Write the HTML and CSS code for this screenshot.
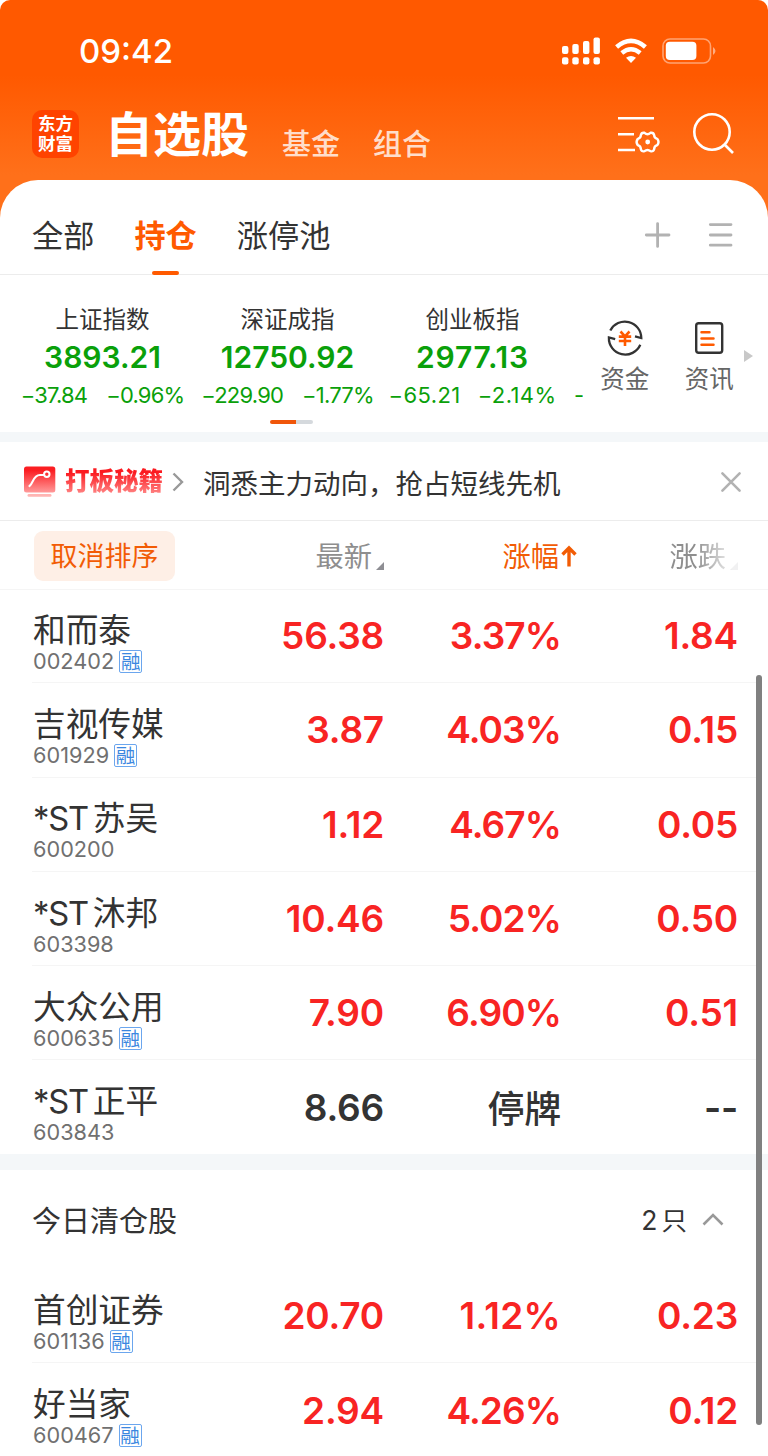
FILE: index.html
```html
<!DOCTYPE html>
<html lang="zh-CN">
<head>
    <meta charset="utf-8"/>
    <title>自选股</title>
    <link rel="stylesheet" href="styles.css">
</head>

<body>
<div id="app">
    <div id="top">
        <div class="status">
            <span class="time">09:42</span>
            <svg class="signal" width="156" height="32" viewBox="560 35 156 32">
                <g fill="#fff">
                    <rect x="562" y="46" width="6.4" height="8" rx="2"/>
                    <rect x="572.3" y="44" width="6.4" height="10" rx="2"/>
                    <rect x="583" y="41" width="6.4" height="13" rx="2"/>
                    <rect x="593.5" y="37.5" width="6.4" height="16.5" rx="2"/>
                    <rect x="562" y="57.3" width="6.4" height="7.2" rx="2"/>
                    <rect x="572.3" y="57.3" width="6.4" height="7.2" rx="2"/>
                    <rect x="583" y="57.3" width="6.4" height="7.2" rx="2"/>
                    <rect x="593.5" y="57.3" width="6.4" height="7.2" rx="2"/>
                    <path d="M631 63 L626 57.8 Q631 54.2 636 57.8 Z"/>
                    <rect x="665.8" y="41.8" width="30.6" height="18.3" rx="4"/>
                </g>
                <path d="M616.6 47 Q631 34.8 645.4 47" fill="none" stroke="#fff" stroke-width="4.6"/>
                <path d="M621.8 53 Q631 45.4 640.2 53" fill="none" stroke="#fff" stroke-width="4.4"/>
                <rect x="663" y="39" width="47.5" height="24" rx="7" fill="none" stroke="#fff" stroke-opacity=".45" stroke-width="1.6"/>
                <path d="M713 47 Q718 51 713 55 Z" fill="#fff" fill-opacity=".5"/>
            </svg>
        </div>
        <div class="nav">
            <div class="logo"><span>东方</span><span>财富</span></div>
            <div class="title">自选股</div>
            <div class="sub">基金</div>
            <div class="sub">组合</div>
            <svg class="nav-icons" width="120" height="46" viewBox="616 111 120 46" fill="none" stroke="#fff" stroke-width="2.6">
                <path d="M618 118.3 H654 M618 134.2 H634 M618 150 H635"/>
                <path d="M644.5 132.8 Q647.5 135.5 650.5 132.8 Q653.5 132.2 654.2 135.2 Q654.2 138 657.2 138.8 Q659.8 142 657.2 145.2 Q654.2 146 654.2 149 Q653.5 152 650.5 151.2 Q647.5 148.6 644.5 151.2 Q641.5 152 640.8 149 Q640.8 146 637.8 145.2 Q635.4 142 637.8 138.8 Q640.8 138 640.8 135.2 Q641.5 132.2 644.5 132.8 Z" stroke-width="2.4" stroke-linejoin="round"/>
                <circle cx="647.7" cy="142" r="2.4" fill="#fff" stroke="none"/>
                <circle cx="712" cy="132" r="17.7"/>
                <path d="M724.5 144.5 L733 153"/>
            </svg>
        </div>
    </div>

    <div id="sheet">
        <div class="tabs">
            <div class="tab">全部</div>
            <div class="tab active">持仓</div>
            <div class="tab">涨停池</div>
            <svg class="tab-icons" width="90" height="28" viewBox="644 221 90 28" fill="none" stroke="#b2b2b2" stroke-width="2.8" stroke-linecap="round">
                <path d="M646.3 235 H669 M657.6 223.6 V246.4"/>
                <path d="M710.3 224.6 H731 M710.3 235 H731 M710.3 245.2 H731"/>
            </svg>
        </div>

        <div class="market">
            <div class="indexes">
                <div class="index">
                    <div class="name">上证指数</div>
                    <div class="point">3893.21</div>
                    <div class="diff"><span>−37.84</span><span>−0.96%</span></div>
                </div>
                <div class="index">
                    <div class="name">深证成指</div>
                    <div class="point">12750.92</div>
                    <div class="diff"><span>−229.90</span><span>−1.77%</span></div>
                </div>
                <div class="index loose">
                    <div class="name">创业板指</div>
                    <div class="point">2977.13</div>
                    <div class="diff"><span>−65.21</span><span>−2.14%</span></div>
                </div>
                <div class="more">-</div>
            </div>
            <div class="entry">
                <svg width="38" height="38" viewBox="606 319 38 38" fill="none" stroke="#333" stroke-width="2.3">
                    <path d="M610.3 330.5 A16.4 16.4 0 0 1 641.3 338 L635 336.3"/>
                    <path d="M640.3 344.8 A16.4 16.4 0 0 1 608.9 337.5 L615.2 339.2"/>
                    <path d="M620.5 331.5 L625 336.3 L629.5 331.5 M618.8 336.6 H631.2 M618.8 341 H631.2 M625 336.3 V346" stroke="#ff5a00" stroke-width="2.6"/>
                </svg>
                <span>资金</span>
            </div>
            <div class="entry">
                <svg width="38" height="38" viewBox="690.5 319 38 38" fill="none">
                    <rect x="696.7" y="323.2" width="26" height="29.6" rx="2.5" stroke="#333" stroke-width="2.4"/>
                    <path d="M702 332.2 H710 M702 338.5 H714 M702 344.7 H714" stroke="#ff5a00" stroke-width="2.5" stroke-linecap="round"/>
                </svg>
                <span>资讯</span>
            </div>
            <div class="next"></div>
            <div class="pager"></div>
        </div>

        <div class="promo">
            <svg width="32" height="32" viewBox="24 466 32 32" fill="none">
                <defs>
                    <linearGradient id="fade" x1="0" y1="0" x2="0" y2="1">
                        <stop offset=".15" stop-color="#fb1e22"/>
                        <stop offset="1" stop-color="#ff9a9a"/>
                    </linearGradient>
                </defs>
                <rect x="24" y="466.5" width="31.3" height="26" rx="2.5" fill="url(#fade)"/>
                <rect x="27.5" y="494" width="24" height="2.8" rx="1.4" fill="#ffb5b3"/>
                <path d="M29.5 486 C33 484 33 475 40 475 H44" stroke="#fff" stroke-width="2.2" stroke-linecap="round"/>
                <circle cx="46.8" cy="474.3" r="2.7" stroke="#fff" stroke-width="2"/>
            </svg>
            <span class="brand">打板秘籍</span>
            <svg width="12" height="20" viewBox="0 0 12 20" fill="none" stroke="#999" stroke-width="2.4">
                <path d="M1.5 1.5 L10 10 L1.5 18.5"/>
            </svg>
            <span class="slogan">洞悉主力动向，抢占短线先机</span>
            <svg class="close" width="22" height="22" viewBox="0 0 22 22" stroke="#b2b2b2" stroke-width="2.6" stroke-linecap="round">
                <path d="M2.4 2.4 L19.6 19.6 M19.6 2.4 L2.4 19.6"/>
            </svg>
        </div>

        <div class="row head">
            <div class="reset">取消排序</div>
            <div class="sort">最新<i></i></div>
            <div class="sort on">涨幅<svg width="16" height="24" viewBox="0 0 16 24" fill="none" stroke="#f25c05" stroke-width="3.4"><path d="M8 22.5 V4 M1.5 10.5 L8 4 L14.5 10.5"/></svg></div>
            <div class="sort faded">涨跌<i></i></div>
        </div>

        <div class="list">
            <div class="row">
                <div class="stock"><b>和而泰</b><span>002402<em>融</em></span></div>
                <div class="num">56.38</div><div class="num rate">3.37%</div><div class="num">1.84</div>
            </div>
            <div class="row">
                <div class="stock"><b>吉视传媒</b><span>601929<em>融</em></span></div>
                <div class="num">3.87</div><div class="num rate">4.03%</div><div class="num">0.15</div>
            </div>
            <div class="row">
                <div class="stock"><b><u>*ST</u>苏吴</b><span>600200</span></div>
                <div class="num">1.12</div><div class="num rate">4.67%</div><div class="num">0.05</div>
            </div>
            <div class="row">
                <div class="stock"><b><u>*ST</u>沐邦</b><span>603398</span></div>
                <div class="num">10.46</div><div class="num rate">5.02%</div><div class="num">0.50</div>
            </div>
            <div class="row">
                <div class="stock"><b>大众公用</b><span>600635<em>融</em></span></div>
                <div class="num">7.90</div><div class="num rate">6.90%</div><div class="num">0.51</div>
            </div>
            <div class="row halted">
                <div class="stock"><b><u>*ST</u>正平</b><span>603843</span></div>
                <div class="num">8.66</div><div class="num state">停牌</div><div class="num">--</div>
            </div>
        </div>

        <div class="cleared">
            <span>今日清仓股</span>
            <span class="count">2<small>只</small></span>
            <svg width="22" height="14" viewBox="0 0 22 14" fill="none" stroke="#999" stroke-width="2.6"><path d="M1.5 12.5 L11 3 L20.5 12.5"/></svg>
        </div>

        <div class="list">
            <div class="row">
                <div class="stock"><b>首创证券</b><span>601136<em>融</em></span></div>
                <div class="num">20.70</div><div class="num rate ones">1.12%</div><div class="num">0.23</div>
            </div>
            <div class="row">
                <div class="stock"><b>好当家</b><span>600467<em>融</em></span></div>
                <div class="num">2.94</div><div class="num rate">4.26%</div><div class="num">0.12</div>
            </div>
        </div>
    </div>
    <div id="scrollbar"></div>
</div>
</body>
</html>
```
FILE: styles.css
```css
body, html {
    margin: 0px;
    padding: 0px;
    background-color: #fff;
}

#app {
    position: relative;
    width: 768px;
    height: 1456px;
    overflow: hidden;
    font-family: Inter, 'Noto Sans CJK SC', sans-serif;
    color: #333;
}

svg {
    display: block;
    flex: none;
}

#top {
    height: 230px;
    border-radius: 10px 10px 0 0;
    background: linear-gradient(#ff5900 0, #ff5900 75px, #ff701a 175px);
}

.status {
    display: flex;
    justify-content: space-between;
    align-items: center;
    height: 102px;
    padding: 0 52px 0 79px;
    box-sizing: border-box;
}

.time {
    font-size: 33px;
    font-weight: 500;
    color: #fff;
}

.nav {
    display: flex;
    align-items: center;
    height: 64px;
    padding-left: 32px;
}

.logo {
    display: flex;
    flex-direction: column;
    align-items: center;
    justify-content: center;
    width: 47px;
    height: 48px;
    border-radius: 10px;
    background-color: #ff4300;
    color: #fff;
    font-size: 17.5px;
    font-weight: 700;
    line-height: 20px;
}

.title {
    margin: -6px 0 0 26px;
    color: #fff;
    font-size: 48px;
    font-weight: 700;
}

.sub {
    margin: 15px 0 0 33px;
    color: rgba(255, 255, 255, 0.8);
    font-size: 29px;
    font-weight: 500;
}

.nav-icons {
    margin-left: auto;
    margin-right: 32px;
}

#sheet {
    margin-top: -50px;
    position: relative;
    background-color: #fff;
    border-radius: 38px 38px 0 0;
}

.tabs {
    display: flex;
    height: 94px;
    padding: 0 34px 0 32px;
    border-bottom: 1px solid #ececec;
}

.tab {
    position: relative;
    margin-right: 40px;
    padding-top: 35px;
    font-size: 31.2px;
    line-height: 42px;
}

.tab.active {
    color: #ff5a00;
    font-weight: 700;
}

.tab.active::after {
    content: '';
    position: absolute;
    left: 18px;
    bottom: -1px;
    width: 27px;
    height: 4px;
    border-radius: 2px;
    background-color: #ff5a00;
}

.tab-icons {
    margin: 41px 0 0 auto;
}

.market {
    position: relative;
    display: flex;
    height: 157px;
    border-bottom: 10px solid #f4f7f9;
}

.indexes {
    display: flex;
    flex: 0 0 583px;
    box-sizing: border-box;
    padding: 28px 0 0 10px;
    overflow: hidden;
}

.index {
    flex: 0 0 185px;
    text-align: center;
}

.name {
    font-size: 23.5px;
    line-height: 34px;
}

.point {
    color: #0aa00a;
    font-size: 30px;
    font-weight: 600;
    line-height: 41px;
}

.diff {
    display: flex;
    justify-content: center;
    gap: 19px;
    color: #0aa00a;
    font-size: 22px;
    letter-spacing: -0.8px;
    line-height: 34px;
    white-space: nowrap;
}

.loose .point {
    letter-spacing: 0.8px;
}

.loose .diff {
    gap: 17px;
    letter-spacing: 0.4px;
}

.more {
    padding: 75px 0 0 9px;
    color: #0aa00a;
    font-size: 22px;
    line-height: 34px;
}

.entry {
    display: flex;
    flex-direction: column;
    align-items: center;
    width: 84.5px;
    padding-top: 44px;
    color: #666;
    font-size: 24.5px;
    line-height: 44px;
}

.entry svg {
    margin-left: -1px;
}

.entry span {
    margin-left: -1px;
}

.next {
    margin: 75px 0 0 -8px;
    width: 0;
    height: 0;
    border: 6.5px solid transparent;
    border-left: 9px solid #c8c8c8;
    border-right: 0;
}

.pager {
    position: absolute;
    left: 270px;
    bottom: 8px;
    width: 43px;
    height: 4px;
    border-radius: 2px;
    background: linear-gradient(90deg, #f0560a 60%, #d5d9dd 60%);
}

.promo {
    display: flex;
    align-items: center;
    height: 78px;
    padding: 2px 26px 0 24px;
    box-sizing: border-box;
}

.brand {
    margin: -2px 9px 0 9px;
    font-size: 24.5px;
    font-weight: 900;
    line-height: 34px;
    color: transparent;
    background: linear-gradient(#fb1a20 25%, #ff8080 85%);
    -webkit-background-clip: text;
    background-clip: text;
}

.slogan {
    margin-left: 19px;
    font-size: 27.5px;
}

.close {
    margin-left: auto;
}

.row {
    display: grid;
    grid-template-columns: 180px 171px 177px 177px;
    height: 94.3px;
    margin-left: 32px;
    padding-left: 1px;
    margin-right: 12px;
    border-bottom: 1px solid #f5f5f5;
    box-sizing: border-box;
    align-items: center;
}

.row.head {
    height: 70px;
    margin: 0;
    padding-left: 33px;
    border-top: 1px solid #ececec;
}

.reset {
    width: 141px;
    height: 50px;
    margin: 1px 0 0 1px;
    border-radius: 9px;
    background-color: #feefe6;
    color: #f25c05;
    font-size: 27px;
    line-height: 52px;
    text-align: center;
}

.sort {
    display: flex;
    justify-content: flex-end;
    align-items: center;
    padding-top: 4px;
    color: #8e8e8e;
    font-size: 28.3px;
    line-height: 40px;
}

.sort i {
    margin: 18px 0 0 4px;
    border-left: 8px solid transparent;
    border-bottom: 8px solid #8e8e93;
}

.sort.on {
    color: #f25c05;
    margin-right: -16px;
}

.sort svg {
    margin: -3px 0 0 2px;
}

.sort.faded {
    -webkit-mask-image: linear-gradient(90deg, #000 76%, rgba(0, 0, 0, 0.12) 97%);
    mask-image: linear-gradient(90deg, #000 76%, rgba(0, 0, 0, 0.12) 97%);
}

.head + .list {
    margin-top: -1px;
}

.stock {
    padding-top: 13px;
}

.stock b {
    display: block;
    font-size: 32.7px;
    font-weight: 400;
    line-height: 38px;
    white-space: nowrap;
}

.stock u {
    margin-right: 5px;
    letter-spacing: -1.2px;
    text-decoration: none;
}

.stock span {
    display: flex;
    align-items: center;
    color: #707070;
    font-size: 21.7px;
    line-height: 25px;
}

.stock em {
    margin-left: 5px;
    width: 21px;
    height: 21px;
    border: 1.5px solid #6ba6ee;
    border-radius: 2px;
    color: #3b87e0;
    font-size: 19.5px;
    font-style: normal;
    line-height: 22px;
    text-align: center;
}

.num {
    color: #f82423;
    font-size: 37px;
    font-weight: 600;
    letter-spacing: -0.2px;
    text-align: right;
}

.num.rate {
    letter-spacing: -0.9px;
}

.num.ones {
    letter-spacing: 0.3px;
}

.halted .num {
    color: #333;
}

.halted .state {
    font-weight: 500;
}

.cleared {
    display: flex;
    align-items: center;
    height: 98px;
    margin-top: -1px;
    padding: 0 44px 1.3px 32px;
    border-top: 16px solid #f4f7f9;
    font-size: 29px;
}

.count {
    margin: 0 15px 0 auto;
    font-size: 26.5px;
}

.count small {
    margin-left: 4px;
    font-size: 25.5px;
}

#scrollbar {
    position: absolute;
    left: 756px;
    top: 675px;
    width: 6px;
    height: 750px;
    border-radius: 3px;
    background-color: #808080;
}
```
